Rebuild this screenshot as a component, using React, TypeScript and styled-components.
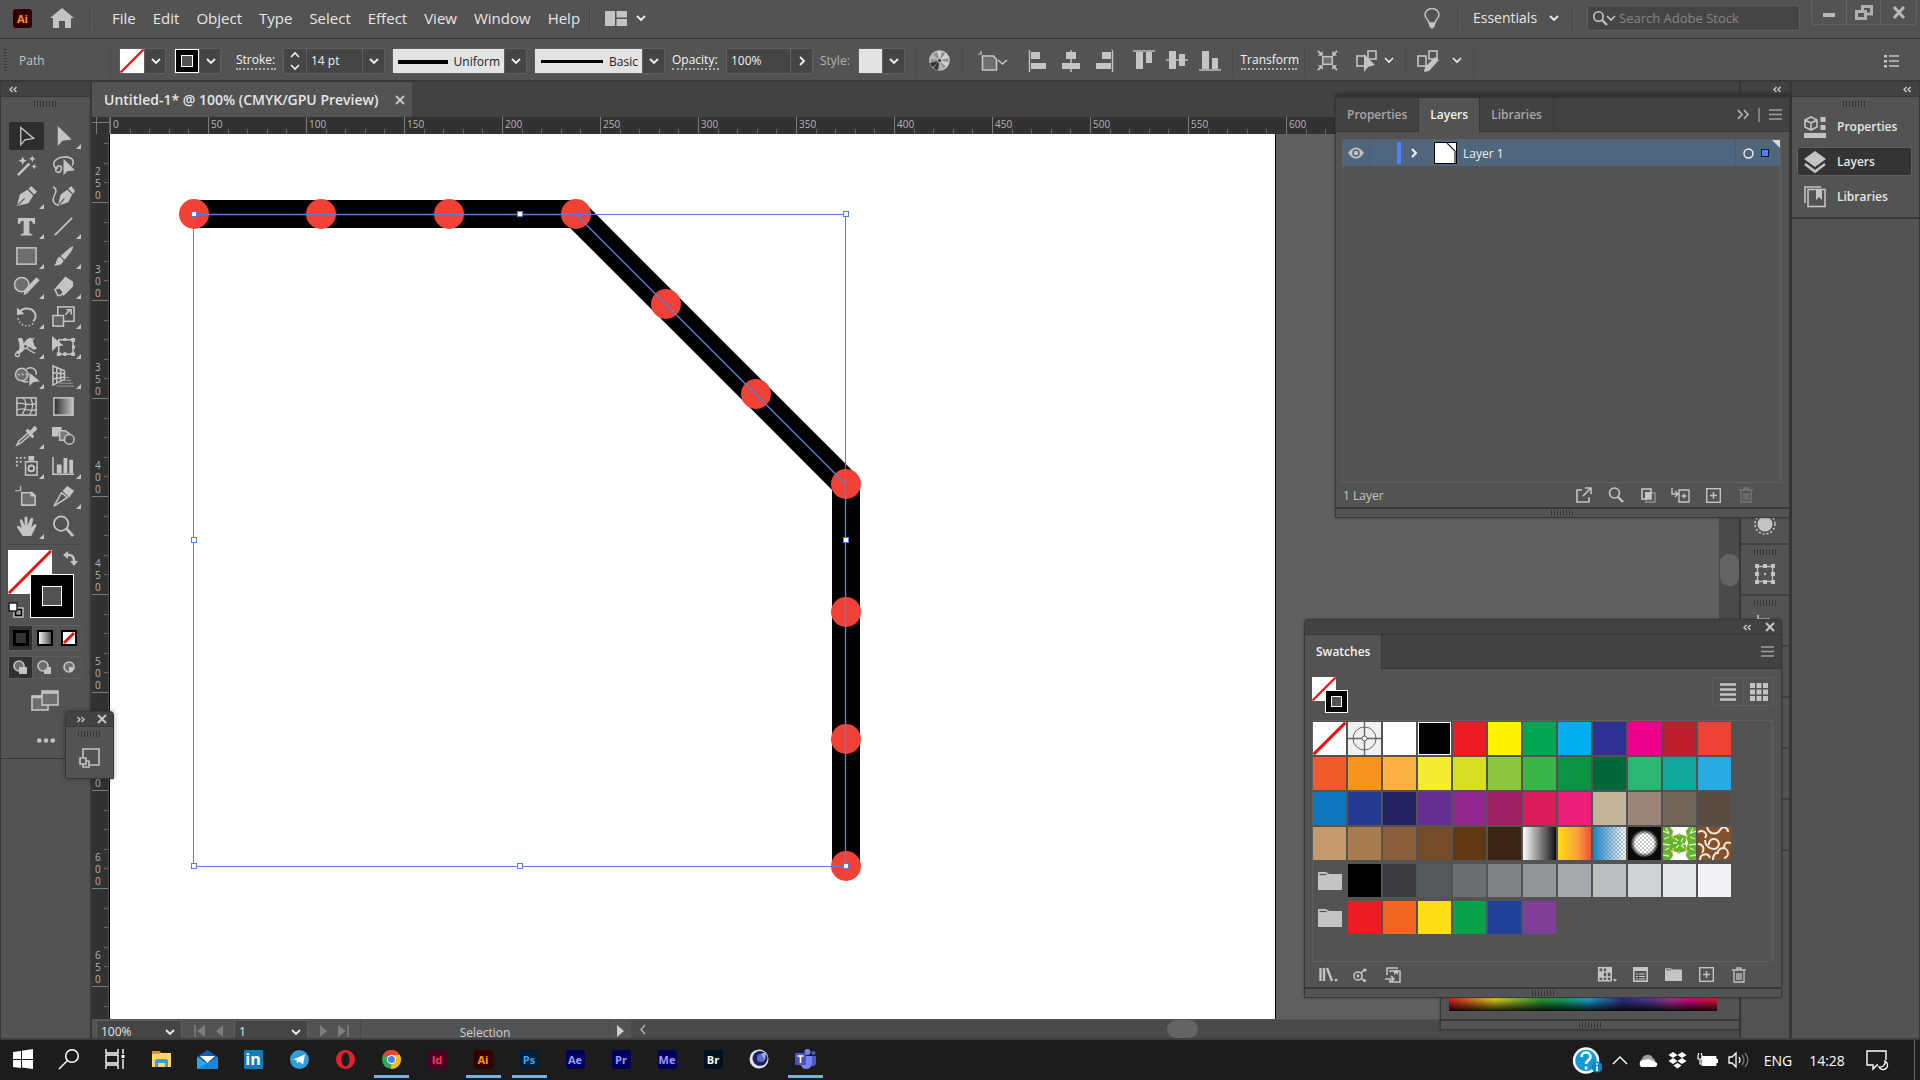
import React from "react";
import styled, { createGlobalStyle, css } from "styled-components";

const c = {
  panel: "#535353",
  dark: "#424242",
  line: "#383838",
  ruler: "#323232",
  canvas: "#606060",
  field: "#454545",
  edge: "#5f5f5f",
  icon: "#c4c4c4",
  text: "#e6e6e6",
  dim: "#a8a8a8",
  blue: "#4f80ff",
  path: "#5a7fd8",
};

const Global = createGlobalStyle`
  * { box-sizing: border-box; }
  html, body { margin: 0; background: ${c.panel}; }
  body { font-family: "Open Sans", "Noto Sans", sans-serif; font-size: 12px; color: ${c.text}; overflow: hidden; }
  button, input, select { font: inherit; color: inherit; background: none; border: 0; padding: 0; margin: 0; outline: 0; appearance: none; border-radius: 0; min-width: 0; }
  svg { display: block; flex: none; }
`;

/* ---------- shared parts ---------- */
const Shell = styled.div`
  display: flex;
  flex-direction: column;
  height: 100vh;
`;
const Button = styled.button<{ $w?: number; $h?: number }>`
  display: flex;
  flex: none;
  align-items: center;
  justify-content: center;
  width: ${(p) => (p.$w ? p.$w + "px" : "auto")};
  height: ${(p) => (p.$h ? p.$h + "px" : "auto")};
  color: ${c.icon};
`;
const Svg = styled.svg<{ $w: number; $h: number }>`
  width: ${(p) => p.$w}px;
  height: ${(p) => p.$h}px;
  fill: none;
  stroke: currentColor;
  stroke-width: 1.6;
  overflow: visible;
`;
const Spacer = styled.div`
  flex: 1;
`;
const Grip = styled.div<{ $vertical?: boolean }>`
  flex: none;
  width: ${(p) => (p.$vertical ? 3 : 23)}px;
  height: ${(p) => (p.$vertical ? 24 : 6)}px;
  background: repeating-linear-gradient(
    ${(p) => (p.$vertical ? "to bottom" : "to right")},
    #343434 0 1px,
    #555 1px 3px
  );
`;

type IP = { w?: number; h?: number; vb?: string; children: React.ReactNode };
const I = ({ w = 24, h, vb = "0 0 24 24", children }: IP) => (
  <Svg $w={w} $h={h ?? w} viewBox={vb} aria-hidden="true">
    {children}
  </Svg>
);
const F = { fill: "currentColor", stroke: "none" };

const Chevron = ({ color = "#f0f0f0" }: { color?: string }) => (
  <I w={10} h={6} vb="0 0 10 6">
    <path d="M1 1l4 4 4-4" strokeWidth="1.8" stroke={color} />
  </I>
);
const DoubleLeft = () => (
  <I w={8} h={5} vb="0 0 8 5">
    <path d="M3.5 0L1 2.5 3.5 5M7.5 0L5 2.5 7.5 5" strokeWidth="1.4" stroke="#ccc" />
  </I>
);
const Close = () => (
  <I w={8} vb="0 0 8 8">
    <path d="M0 0l8 8M8 0L0 8" strokeWidth="2" />
  </I>
);
const MenuLines = () => (
  <I w={13} h={11} vb="0 0 13 11">
    <path d="M0 1h13M0 5.5h13M0 10h13" strokeWidth="1.4" stroke="#a0a0a0" />
  </I>
);

/* ---------- menu bar ---------- */
const MenuBar = styled.header`
  display: flex;
  align-items: center;
  height: 39px;
  flex: none;
  border-bottom: 1px solid ${c.line};
  padding: 0 3px 2px 13px;
`;
const Badge = styled.span<{ $bg: string; $fg: string; $large?: boolean }>`
  display: flex;
  align-items: center;
  justify-content: center;
  width: 19px;
  height: 19px;
  border-radius: ${(p) => (p.$large ? 1 : 3)}px;
  background: ${(p) => p.$bg};
  color: ${(p) => p.$fg};
  font-size: ${(p) => (p.$large ? 16 : 11)}px;
  font-weight: 700;
  line-height: 1;
`;
const Home = styled(Button)`
  margin: 0 16px 0 18px;
`;
const BarRule = styled.span`
  flex: none;
  width: 2px;
  height: 24px;
  background: #5f5f5f;
  border-left: 1px solid #474747;
`;
const Menus = styled.nav`
  display: flex;
  gap: 1px;
  padding-left: 12px;
  width: 497px;
`;
const MenuItem = styled.button`
  padding: 0 8px;
  font-size: 15px;
  line-height: 20px;
`;
const LayoutButton = styled(Button)`
  gap: 9px;
  margin-left: 14px;
`;
const Picker = styled.label`
  display: flex;
  align-items: center;
  gap: 8px;
`;
const Workspaces = styled.select`
  width: 68px;
  font-size: 14px;
  line-height: 20px;
`;
const TopRight = styled.div`
  display: flex;
  align-items: center;
  gap: 13px;
  height: 100%;
`;
const Bulb = styled(Button)`
  margin-right: 5px;
`;
const SearchBox = styled.label`
  display: flex;
  align-items: center;
  gap: 4px;
  width: 213px;
  height: 26px;
  padding-left: 5px;
  background: ${c.field};
  border: 1px solid ${c.edge};
  border-radius: 3px;
  margin-right: -2px;
  color: ${c.icon};
  input {
    flex: 1;
    font-size: 13px;
  }
  input::placeholder {
    color: #858585;
    opacity: 1;
  }
`;
const WindowButtons = styled.div`
  display: flex;
  align-self: flex-start;
  height: 25px;
  border: 1px solid #646464;
  border-top: 0;
  border-radius: 0 0 4px 4px;
  button + button {
    border-left: 1px solid #646464;
  }
`;

/* ---------- control bar ---------- */
const ControlBar = styled.section`
  display: flex;
  align-items: center;
  height: 43px;
  flex: none;
  padding: 2px 21px 0 0;
  border-bottom: 2px solid ${c.line};
`;
const Cell = styled.div<{ $w?: number; $gap?: number }>`
  display: flex;
  flex: none;
  align-items: center;
  justify-content: center;
  gap: ${(p) => p.$gap ?? 0}px;
  width: ${(p) => (p.$w ? p.$w + "px" : "auto")};
  height: 32px;
  border-right: 1px solid #4a4a4a;
  color: ${c.icon};
`;
const PathCell = styled(Cell)`
  justify-content: flex-start;
  gap: 12px;
  padding-left: 4px;
  font-size: 12px;
`;
const Options = styled(Cell)`
  justify-content: flex-start;
  padding: 0 10px 0 8px;
`;
const SwatchPicker = styled.div`
  display: flex;
  height: 26px;
  width: 47px;
  border: 1px solid ${c.edge};
  background: ${c.field};
  border-radius: 2px;
`;
const SwatchPair = styled.div`
  display: flex;
  gap: 8px;
  margin-right: 8px;
`;
const Caption = styled.label<{ $w: number; $plain?: boolean }>`
  width: ${(p) => p.$w}px;
  font-size: 12px;
  line-height: 17px;
  white-space: nowrap;
  color: ${(p) => (p.$plain ? "#b4b4b4" : "#f2f2f2")};
  border-bottom: ${(p) => (p.$plain ? "0" : "2px dotted #b0b0b0")};
`;
const Transform = styled.button`
  width: 56px;
  font-size: 12px;
  line-height: 17px;
  white-space: nowrap;
  color: #f2f2f2;
  border-bottom: 2px dotted #b0b0b0;
`;
const Field = styled.div<{ $w: number }>`
  display: flex;
  width: ${(p) => p.$w}px;
  height: 26px;
  background: ${c.field};
  border: 1px solid ${c.edge};
  border-radius: 2px;
  color: #f0f0f0;
  input {
    flex: 1;
    padding-left: 4px;
    font-size: 12px;
  }
  button + input {
    border-left: 1px solid ${c.edge};
  }
`;
const Drop = styled(Button)`
  width: 22px;
  border-left: 1px solid ${c.edge};
`;
const Brush = styled.button`
  display: flex;
  flex: 1;
  align-items: center;
  justify-content: flex-end;
  gap: 6px;
  padding: 2px 4px 0 0;
  background: #e3e3e3;
  color: #222;
  font-size: 12px;
`;
const BrushLine = styled.span<{ $w: number; $t: number }>`
  width: ${(p) => p.$w}px;
  height: ${(p) => p.$t}px;
  background: #000;
`;
const StyleChip = styled.span`
  width: 24px;
  background: #e3e3e3;
`;

const NoneIcon = ({ s }: { s: number }) => (
  <svg width={s} height={s} viewBox="0 0 24 24">
    <rect width="24" height="24" fill="#fff" />
    <path d="M0.500 23.500L23.500 0.500" stroke="#e81010" strokeWidth={s > 40 ? 1.6 : 2.2} />
  </svg>
);
const StrokeIcon = ({ s }: { s: number }) => (
  <svg width={s} height={s} viewBox={`0 0 ${s} ${s}`}>
    <rect x="0.5" y="0.5" width={s - 1} height={s - 1} fill="#000" stroke="#fff" />
    <rect
      x={Math.round(s * 0.27) + 0.5}
      y={Math.round(s * 0.27) + 0.5}
      width={s - 1 - 2 * Math.round(s * 0.27)}
      height={s - 1 - 2 * Math.round(s * 0.27)}
      fill="#535353"
      stroke="#fff"
    />
  </svg>
);

const alignH = [
  "M1.500 0v22|M3 2h9v7H3zM3 13h15v6H3z",
  "M10 0v22|M5 2h10v7H5zM1 13h18v6H1z",
  "M18.500 0v22|M8 2h9v7H8zM2 13h15v6H2z",
];
const alignV = [
  "M0 1h22|M3 2h7v17H3zM13 2h6v11h-6z",
  "M0 10h22|M3 1h7v18H3zM13 4h6v12h-6z",
  "M0 20h22|M3 1h7v18H3zM13 8h6v11h-6z",
];
const Align = ({ d, label }: { d: string; label: string }) => {
  const [l, f] = d.split("|");
  return (
    <Button $w={33} $h={30} aria-label={label}>
      <I w={22} h={22} vb="0 0 20 22">
        <path d={l} strokeWidth="1.4" />
        <path d={f} {...F} />
      </I>
    </Button>
  );
};
const AlignGroup = styled.div`
  display: flex;
  padding: 0 3px;
`;

/* ---------- workspace ---------- */
const Workspace = styled.main`
  position: relative;
  display: flex;
  flex: 1;
  min-height: 0;
  border-bottom: 2px solid #3e3e3e;
`;
const Tools = styled.aside`
  display: flex;
  flex-direction: column;
  width: 92px;
  flex: none;
  border-left: 1px solid ${c.line};
  border-right: 2px solid ${c.line};
`;
const Head = styled.div`
  display: flex;
  align-items: center;
  height: 15px;
  flex: none;
  padding: 0 8px;
  background: ${c.dark};
  border-bottom: 1px solid ${c.line};
`;
const HeadEnd = styled(Head)`
  justify-content: flex-end;
`;
const PanelHead = styled(HeadEnd)`
  gap: 15px;
  padding-right: 7px;
  border-radius: 4px 4px 0 0;
`;
const ToolBody = styled.div`
  height: 662px;
  border-bottom: 1px solid ${c.line};
  border-right: 1px solid #4a4a4a;
`;
const GripRow = styled.div`
  display: flex;
  justify-content: center;
  align-items: flex-start;
  height: 25px;
  padding-top: 4px;
`;
const ToolGrid = styled.div`
  display: grid;
  grid-template-columns: 37px 37px;
  grid-auto-rows: 30px;
  padding-left: 8px;
`;
const ToolButton = styled.button<{ $on?: boolean; $more?: boolean }>`
  position: relative;
  display: flex;
  align-items: center;
  justify-content: center;
  width: 35px;
  height: 28px;
  color: ${c.icon};
  border-radius: 2px;
  background: ${(p) => (p.$on ? "#2d2d2d" : "none")};
  ${(p) =>
    p.$more &&
    css`
      &::after {
        content: "";
        position: absolute;
        right: 0;
        bottom: 1px;
        border-left: 5px solid transparent;
        border-bottom: 5px solid ${c.icon};
      }
    `}
`;
const FillStroke = styled.div`
  position: relative;
  height: 81px;
  margin: 2px 7px 0;
  border-top: 1px solid #4a4a4a;
`;
const Over = styled.button<{ $x: number; $y: number }>`
  position: absolute;
  left: ${(p) => p.$x}px;
  top: ${(p) => p.$y}px;
  color: ${c.icon};
`;
const Modes = styled.div<{ $h: number }>`
  display: flex;
  width: 74px;
  height: ${(p) => p.$h}px;
  margin: 0 0 5px 7px;
  border: 1px solid #5d5d5d;
  border-radius: 2px;
`;
const Mode = styled.button<{ $on?: boolean }>`
  flex: 1;
  display: flex;
  align-items: center;
  justify-content: center;
  color: ${c.icon};
  background: ${(p) => (p.$on ? "#303030" : "none")};
  & + & {
    border-left: 1px solid #5d5d5d;
  }
`;
const ScreenRow = styled.div<{ $h: number }>`
  display: flex;
  align-items: center;
  height: ${(p) => p.$h}px;
  padding-left: 30px;
`;

const star = (x: number, y: number, r: number) =>
  `M${x} ${y - r}l${r * 0.3} ${r * 0.7} ${r * 0.7} ${r * 0.3} ${-r * 0.7} ${r * 0.3} ${-r * 0.3} ${r * 0.7} ${-r * 0.3} ${-r * 0.7} ${-r * 0.7} ${-r * 0.3} ${r * 0.7} ${-r * 0.3}z`;

const tools: { n: string; more?: boolean; g: React.ReactNode }[] = [
  { n: "Selection", g: <path d="M6 2.5v18l4.500-5 9-1.500z" strokeWidth="1.4" /> },
  { n: "Direct selection", more: true, g: <path d="M6 1v21l5-5.500 9.500-1.500z" {...F} /> },
  {
    n: "Magic wand",
    g: (
      <>
        <path d="M3 21L15 9" strokeWidth="2.6" />
        <path d={star(8, 6, 4.5) + star(18, 4, 3.5) + star(20, 12, 3)} {...F} />
      </>
    ),
  },
  {
    n: "Lasso",
    g: (
      <>
        <path d="M5 15C-1 10 2 3 12 2c9-.5 12 4 9 9M5 13.500a2.500 2 0 1 1 4 1.500M9 11c2 3 0 8-3 7-3-1-3-4 0-4" />
        <path d="M12 4v17l4-4 8-1z" {...F} />
      </>
    ),
  },
  {
    n: "Pen",
    more: true,
    g: (
      <>
        <path d="M2 22l3-12 8-5 6 6-5 8z" {...F} />
        <path d="M14 4l3-3 6 6-3 3z" {...F} />
        <path d="M3 21l7-7" stroke={c.panel} strokeWidth="1.2" />
      </>
    ),
  },
  {
    n: "Curvature",
    g: (
      <>
        <path d="M1 2c5 2 3 6 1 10s0 9 5 9" />
        <path d="M6 22l3-12 7-5 5 5-4 8z" {...F} />
        <path d="M17 4l3-3 4 5-2 3z" {...F} />
        <path d="M7 21l6-7" stroke={c.panel} strokeWidth="1.2" />
      </>
    ),
  },
  { n: "Type", more: true, g: <path d="M3 3h18v6h-2.500c0-2-1-3-3.500-3v13l3 1v1.500H6V20l3-1V6c-2.500 0-3.500 1-3.500 3H3z" {...F} /> },
  { n: "Line", more: true, g: <path d="M3 21L21 3" strokeWidth="1.8" /> },
  { n: "Rectangle", more: true, g: <rect x="2" y="3" width="20" height="17" fill="#6e6e6e" /> },
  {
    n: "Paintbrush",
    more: true,
    g: (
      <>
        <path d="M22 1.500c1 2-6 11-9 14l-4-4c3-3 11-10.500 13-10z" {...F} />
        <path d="M8 12l4 4c-1 5-6 6-10 5 3-1 2-7 6-9z" {...F} />
      </>
    ),
  },
  {
    n: "Shaper",
    more: true,
    g: (
      <>
        <circle cx="7" cy="10" r="7.5" fill="#6e6e6e" />
        <path d="M24 4L12 16.500" strokeWidth="4.5" />
        <path d="M10 15l4 3.500-5 2.500z" {...F} />
      </>
    ),
  },
  {
    n: "Eraser",
    more: true,
    g: (
      <>
        <path d="M14 1.500l8 5.500v5L12 22l-3-5-5-4z" {...F} />
        <path d="M3 15l5-2 4 5-3 3.500H6z" fill={c.panel} />
      </>
    ),
  },
  {
    n: "Rotate",
    more: true,
    g: (
      <>
        <path d="M4 8C8 2 18 2 21 9c1 3 0 6-2 8" strokeWidth="2" />
        <path d="M2 2.500v8l8-1z" {...F} />
        <path d="M3 14c2 8 11 10 16 5" strokeDasharray="1.5 2.2" />
      </>
    ),
  },
  {
    n: "Scale",
    more: true,
    g: (
      <>
        <rect x="6" y="2" width="17" height="15" />
        <rect x="1" y="11" width="11" height="11" fill="#606060" />
        <path d="M14 10l5-5M15 5h5v5" />
      </>
    ),
  },
  {
    n: "Width",
    more: true,
    g: (
      <>
        <path d="M3 4c4-3 6 1 6 5 3-5 7-8 9-5 2 4 1 8 5 9-2 4-5 2-7 0-3-2-5 1-7 3-2 3-6 4-8 1 4 0 5-4 2-13z" {...F} />
        <path d="M3 20L20 3M11 13c3 1 4 4 10 6" strokeWidth="1.4" />
        <circle cx="2.500" cy="20.500" r="2" fill={c.panel} strokeWidth="1.4" />
        <circle cx="11" cy="12" r="2.200" fill={c.panel} strokeWidth="1.4" />
      </>
    ),
  },
  {
    n: "Free transform",
    more: true,
    g: (
      <>
        <rect x="7" y="5" width="15" height="15" />
        <path d="M0 1v16l5-5 7-1z" {...F} />
        <path d="M12 3h3v3h-3zM20 3h4v4h-4zM21 11h3v3h-3zM20 18h4v4h-4zM12 18h3v4h-3zM5 18h4v4H5z" {...F} />
      </>
    ),
  },
  {
    n: "Shape builder",
    more: true,
    g: (
      <>
        <circle cx="7" cy="10" r="6.500" fill="#6e6e6e" />
        <path d="M12 4c6-3 11 1 10 6M8 17c2 1 4 1 6 0" />
        <path d="M3 10h12" strokeDasharray="2 2" />
        <path d="M15 8v14l4-4 7-1z" {...F} />
      </>
    ),
  },
  {
    n: "Perspective grid",
    more: true,
    g: (
      <>
        <path d="M1 1v20l12-6V6zM1 8l12 1M1 14.500l12-2M5 3v16M9 5v12" />
        <path d="M14 13h4M12 16h8M8 19h14M5 22h18" strokeWidth="1" stroke="#999" />
      </>
    ),
  },
  {
    n: "Mesh",
    g: (
      <>
        <rect x="2" y="3" width="20" height="18" />
        <path d="M8 3c6 5 3 12-1 18M16 3c3 5 3 12-1 18M2 9c7-2 9 3 20 0M2 16c8-5 12 3 20-1" strokeWidth="1.3" />
      </>
    ),
  },
  {
    n: "Gradient",
    g: (
      <>
        <defs>
          <linearGradient id="tg">
            <stop offset="0" stopColor="#2a2a2a" />
            <stop offset="1" stopColor="#c4c4c4" />
          </linearGradient>
        </defs>
        <rect x="2" y="3" width="20" height="18" fill="url(#tg)" />
      </>
    ),
  },
  {
    n: "Eyedropper",
    more: true,
    g: (
      <>
        <path d="M14 8L4 17l-2 4 4-2L16 10" />
        <path d="M11 6l2-2 3 2 4-5c2 0 3 2 3 4l-5 4 2 3-2 2z" {...F} />
      </>
    ),
  },
  {
    n: "Blend",
    g: (
      <>
        <path d="M0 2h10v3l-3 2v5H0z" {...F} />
        <path d="M8 6h6l4 3-5 7H8z" fill="#7a7a7a" />
        <circle cx="18" cy="15" r="5" fill={c.panel} />
      </>
    ),
  },
  {
    n: "Symbol sprayer",
    more: true,
    g: (
      <>
        <rect x="11" y="7" width="12" height="14" />
        <circle cx="17" cy="14" r="3" strokeWidth="2" />
        <path d="M14 1h6v5h-6zM1 2h2v2H1zM5 2h2v2H5zM9 2h2v2H9zM1 6h2v2H1zM5 6h2v2H5zM1 10h2v2H1z" {...F} />
      </>
    ),
  },
  {
    n: "Graph",
    more: true,
    g: (
      <>
        <path d="M1 2v18h22" />
        <path d="M5 10h5v9H5zM12 3h4v16h-4zM18 5h4v14h-4z" {...F} />
      </>
    ),
  },
  {
    n: "Artboard",
    g: (
      <>
        <path d="M7 8h10l4 4v9H7z" fill="#6e6e6e" />
        <path d="M16 7h2l4 4v1h-6z" {...F} />
        <path d="M6 1v5M0 6h6" strokeWidth="1.2" />
      </>
    ),
  },
  {
    n: "Slice",
    more: true,
    g: (
      <>
        <path d="M2 22L10 8l6 5z" />
        <path d="M11 6l5-5 7 5-5 7z" {...F} />
      </>
    ),
  },
  {
    n: "Hand",
    more: true,
    g: <path d="M8 22L3 14c-2-2 0-4 2-2l2 2L5 6c0-2 2-2 3 0l2 5V3c0-2 3-2 3 0v8l3-7c1-2 3-1 3 1l-2 8 3-3c2-1 3 0 2 2l-5 10z" {...F} />,
  },
  {
    n: "Zoom",
    g: (
      <>
        <circle cx="9.500" cy="9" r="7.5" strokeWidth="1.8" />
        <path d="M15 14l7 8" strokeWidth="3" />
      </>
    ),
  },
];

/* ---------- document ---------- */
const Doc = styled.section`
  display: flex;
  flex: 1;
  flex-direction: column;
  min-width: 0;
  background: ${c.panel};
`;
const TabStrip = styled.div`
  display: flex;
  height: 35px;
  flex: none;
  background: ${c.dark};
`;
const DocTab = styled.div`
  display: flex;
  align-items: center;
  padding: 0 8px 0 12px;
  width: 320px;
  justify-content: space-between;
  background: ${c.panel};
  font-size: 14px;
  font-weight: 600;
  white-space: nowrap;
`;
const RulerRow = styled.div`
  display: flex;
  height: 17px;
  flex: none;
  background: ${c.ruler};
`;
const Corner = styled.div`
  width: 18px;
  flex: none;
  border-right: 1px solid #666;
  background: linear-gradient(#777, #777) 4px 0 / 1px 100% no-repeat, linear-gradient(#777, #777) 0 5px / 100% 1px no-repeat;
`;
const HRuler = styled.div`
  display: flex;
  flex: 1;
  overflow: hidden;
`;
const HMark = styled.span`
  flex: none;
  width: 98px;
  padding-left: 2px;
  border-left: 1px solid #7c7c7c;
  color: #b4b4b4;
  font-size: 10px;
  line-height: 15px;
  background: repeating-linear-gradient(to right, transparent 0 calc(98px / 5 - 1px), #666 calc(98px / 5 - 1px) calc(98px / 5)) 0 100% / 100% 5px no-repeat;
`;
const Middle = styled.div`
  display: flex;
  flex: 1;
  min-height: 0;
`;
const VRuler = styled.div`
  display: flex;
  flex-direction: column;
  width: 17px;
  flex: none;
  overflow: hidden;
  background: ${c.ruler};
  border-right: 1px solid #4c4c4c;
`;
const VMark = styled.span<{ $first?: boolean }>`
  display: flex;
  flex: none;
  flex-direction: column;
  justify-content: flex-end;
  height: ${(p) => (p.$first ? 69 : 98)}px;
  padding: 0 0 1px 3px;
  border-bottom: 1px solid #7c7c7c;
  color: #b4b4b4;
  font-size: 10px;
  line-height: 12px;
  background: repeating-linear-gradient(to top, transparent 0 calc(98px / 5 - 1px), #666 calc(98px / 5 - 1px) calc(98px / 5)) 100% 0 / 4px 100% no-repeat;
`;
const Canvas = styled.div`
  flex: 1;
  min-width: 0;
  overflow: hidden;
  background: ${c.canvas};
`;
const Artboard = styled.div`
  width: 1167px;
  height: 100%;
  background: #fff;
  border: solid #000;
  border-width: 0 1px;
`;
const VScroll = styled.div`
  width: 20px;
  flex: none;
  padding: 420px 0 0 1px;
  background: #4a4a4a;
`;
const Thumb = styled.div<{ $w: number; $h: number }>`
  width: ${(p) => p.$w}px;
  height: ${(p) => p.$h}px;
  border-radius: 9px;
  background: #646464;
`;
const Status = styled.footer`
  display: flex;
  align-items: stretch;
  height: 19px;
  flex: none;
  padding: 1px 0 0 4px;
  font-size: 12px;
  line-height: 26px;
  overflow: hidden;
`;
const StatusPick = styled.label<{ $w: number }>`
  display: flex;
  align-items: center;
  width: ${(p) => p.$w}px;
  height: 24px;
  padding-right: 6px;
  background: ${c.field};
  border: 1px solid ${c.edge};
  select {
    flex: 1;
    padding-left: 4px;
  }
`;
const Nav = styled.div<{ $w: number }>`
  display: flex;
  align-items: center;
  justify-content: center;
  gap: 11px;
  width: ${(p) => p.$w}px;
  height: 22px;
  color: #7c7c7c;
`;
const StatusText = styled.div`
  width: 250px;
  text-align: center;
  color: #cfcfcf;
  border: solid #484848;
  border-width: 0 1px;
`;
const HScroll = styled.div`
  display: flex;
  align-items: flex-start;
  flex: 1;
  padding-left: 9px;
  background: #4a4a4a;
  color: #aaa;
`;
const HTrack = styled.div`
  flex: 1;
  padding-left: 522px;
`;

const anchors = [
  [84, 80], [211, 80], [339, 80], [466, 80], [556, 170], [646, 260], [736, 350], [736, 478], [736, 605], [736, 732],
];
const handles = [
  [84, 80], [410, 80], [736, 80], [84, 406], [736, 406], [84, 732], [410, 732], [736, 732],
];

/* ---------- docks ---------- */
const Narrow = styled.aside`
  display: flex;
  flex-direction: column;
  width: 51px;
  flex: none;
  border-left: 2px solid ${c.line};
  border-right: 1px solid ${c.line};
  color: ${c.icon};
`;
const NarrowTop = styled.div`
  height: 397px;
`;
const DockGroup = styled.div`
  display: flex;
  flex-direction: column;
  align-items: center;
  gap: 9px;
  height: 51px;
  padding-top: 4px;
  border-bottom: 2px solid #404040;
`;
const Wide = styled.aside`
  display: flex;
  flex-direction: column;
  width: 130px;
  flex: none;
  border-left: 2px solid ${c.line};
  border-right: 1px solid ${c.line};
`;
const DockList = styled.div`
  height: 122px;
  padding: 4px 7px 0 5px;
  border-bottom: 2px solid ${c.line};
`;
const DockItem = styled.button<{ $on?: boolean }>`
  display: flex;
  align-items: center;
  gap: 11px;
  width: 100%;
  height: 29px;
  margin-bottom: 6px;
  padding-left: 6px;
  border-radius: 3px;
  border: 1px solid ${(p) => (p.$on ? "#606060" : "transparent")};
  background: ${(p) => (p.$on ? "#343434" : "none")};
  font-size: 12px;
  font-weight: 600;
  svg {
    color: ${c.icon};
  }
`;
const DockGrip = styled.div`
  display: flex;
  justify-content: center;
  height: 11px;
`;

/* ---------- floating panels ---------- */
const Panel = styled.section<{ $right: number; $w: number; $top?: number; $bottom?: number; $z: number }>`
  position: absolute;
  z-index: ${(p) => p.$z};
  right: ${(p) => p.$right}px;
  ${(p) => (p.$top !== undefined ? `top: ${p.$top}px;` : `bottom: ${p.$bottom}px;`)}
  width: ${(p) => p.$w}px;
  background: ${c.panel};
  border: 1px solid ${c.line};
  border-radius: 4px 4px 0 0;
  box-shadow: 0 0 3px rgba(0, 0, 0, 0.35);
`;
const Tabs = styled.div`
  display: flex;
  align-items: center;
  height: 34px;
  padding-right: 7px;
  background: ${c.dark};
  border-bottom: 1px solid ${c.line};
  color: #b8b8b8;
`;
const Tab = styled.button<{ $on?: boolean }>`
  height: 34px;
  padding: 0 11px;
  font-size: 12px;
  font-weight: 600;
  color: ${(p) => (p.$on ? "#f2f2f2" : c.dim)};
  background: ${(p) => (p.$on ? c.panel : "none")};
  border-right: 1px solid ${c.line};
`;
const LayersTop = styled.div`
  height: 4px;
  background: #333;
`;
const TabTools = styled.div`
  display: flex;
  align-items: center;
  gap: 9px;
`;
const LayerList = styled.div`
  height: 344px;
  margin: 7px 8px 0 6px;
  border: 1px solid ${c.edge};
`;
const LayerRow = styled.div`
  position: relative;
  display: flex;
  align-items: center;
  height: 26px;
  background: #50667c;
  color: #f0f0f0;
  font-size: 12px;
`;
const Eye = styled(Button)`
  border-right: 1px solid #475c71;
`;
const ColorBar = styled.span`
  width: 4px;
  height: 22px;
  margin: 0 10px 0 27px;
  background: ${c.blue};
`;
const Thumbnail = styled.span`
  margin: 0 6px 0 17px;
  border: 1px solid #000;
`;
const Target = styled.div`
  display: flex;
  align-items: center;
  gap: 7px;
  height: 26px;
  padding: 0 11px 0 7px;
  border-left: 1px solid #475c71;
`;
const Chip = styled.span`
  width: 8px;
  height: 8px;
  background: ${c.blue};
  border: 1px solid #10182c;
`;
const Fold = styled.span`
  position: absolute;
  top: 0;
  right: 0;
  border-top: 8px solid #d8d8d8;
  border-left: 8px solid transparent;
`;
const PanelFoot = styled.div<{ $h: number }>`
  display: flex;
  align-items: center;
  height: ${(p) => p.$h}px;
  padding: 0 27px 0 7px;
  color: ${c.icon};
`;
const GripFoot = styled.div`
  display: flex;
  justify-content: center;
  height: 10px;
  padding-top: 1px;
  border-top: 2px solid ${c.line};
`;
const SwatchTop = styled.div`
  display: flex;
  justify-content: space-between;
  height: 51px;
  padding: 8px 7px 0 7px;
`;
const FillStack = styled.div`
  position: relative;
  width: 40px;
  height: 40px;
`;
const ViewSwitch = styled.div`
  display: flex;
  height: 29px;
  border: 1px solid ${c.edge};
  border-radius: 3px;
  button + button {
    border-left: 1px solid ${c.edge};
  }
`;
const SwatchBox = styled.div`
  display: flex;
  flex-direction: column;
  gap: 4px;
  height: 242px;
  margin: 0 8px 0 7px;
  padding-top: 1px;
  border: 1px solid ${c.edge};
`;
const SwatchGrid = styled.div`
  display: grid;
  grid-template-columns: repeat(12, 33px);
  grid-auto-rows: 33px;
  gap: 2px;
`;
const Swatch = styled.button<{ $bg: string; $on?: boolean }>`
  display: flex;
  align-items: center;
  justify-content: center;
  overflow: hidden;
  background: ${(p) => p.$bg};
  border: ${(p) => (p.$on ? "1px solid #fff" : "0")};
  color: ${c.icon};
`;
const Spectrum = styled.div`
  height: 60px;
  margin: 8px 22px 8px 8px;
  background: linear-gradient(to bottom, transparent 78%, rgba(0, 0, 0, 0.9)),
    linear-gradient(to right, #ed1c24, #f0e020 17%, #2aa43a 35%, #16b060 42%, #1ab0e0 52%, #2e3192 65%, #5a3aa0 75%, #b03a9c 83%, #ec008c 90%, #e02030);
`;
const Mini = styled.section`
  position: absolute;
  z-index: 3;
  left: 65px;
  top: 629px;
  width: 49px;
  background: ${c.panel};
  border: 1px solid ${c.line};
  border-radius: 4px 4px 0 0;
  box-shadow: 0 0 5px rgba(0, 0, 0, 0.35);
`;
const MiniHead = styled(Head)`
  justify-content: space-between;
  padding: 0 7px 0 11px;
  color: ${c.icon};
`;
const MiniBody = styled.div`
  display: flex;
  flex-direction: column;
  align-items: center;
  gap: 11px;
  height: 51px;
  padding-top: 4px;
  color: ${c.icon};
`;

const leaf = (
  <svg width="33" height="33" viewBox="0 0 33 33">
    <rect width="33" height="33" fill="#fff" />
    <path d="M0 0h7l3 4-1 6 2 6-2 6 1 7-3 4H0zM33 0h-7l-3 4 1 6-2 6 2 6-1 7 3 4h7zM10 9l6-2 7 2 2 7-2 8-7 2-6-2-2-8z" fill="#62b32e" />
    <path d="M0 4l5 2M3 1l3 6M1 12l5-2M0 17l7 1M2 23l4-2M0 28l6 1M33 4l-5 2M30 1l-3 6M32 12l-5-2M33 17l-7 1M31 23l-4-2M33 28l-6 1M12 11l3 3M20 11l-2 4M13 21l3-3M21 21l-3-3M10 16h4M19 17h4" stroke="#e2f2c0" strokeWidth="1.300" />
    <path d="M8 8l3 4M25 8l-3 4M8 25l3-4M25 25l-3-4M16 6v3M16 24v3" stroke="#f3b62e" strokeWidth="1.300" />
  </svg>
);
const swirl = (
  <svg width="33" height="33" viewBox="0 0 33 33">
    <rect width="33" height="33" fill="#85502c" />
    <g fill="none" stroke="#f4e9dc" strokeWidth="2">
      <path d="M0 5c6-3 10 2 7 6M9 0c2 8 10 8 13 3s8-2 8 2M11 18a5 5 0 1 1 5 4 9 9 0 0 1-9-9M0 17c5 0 7 5 4 9M2 33c0-6 8-8 10-2M20 27a5 5 0 1 1 6 4M33 16c-6-2-8 2-6 6M15 33c0-4 2-7 5-8" />
    </g>
  </svg>
);
const checker = "repeating-conic-gradient(#c8c8c8 0 25%, #fff 0 50%) 0 0 / 4px 4px";
const registration = (
  <svg width="33" height="33" viewBox="0 0 33 33" fill="none" stroke="#666">
    <circle cx="16.5" cy="16.5" r="11.5" />
    <circle cx="16.5" cy="16.5" r="2.5" />
    <path d="M16.5 0v14M16.5 19v14M0 16.5h14M19 16.5h14" strokeWidth="1.4" />
  </svg>
);
const colors: string[] = [
  "none", "reg", "#ffffff", "#000000", "#ed1c24", "#fff200", "#00a651", "#00aeef", "#2e3192", "#ec008c", "#be1e2d", "#ef4136",
  "#f15a29", "#f7941d", "#fbb040", "#f5ec31", "#d7df23", "#8dc63f", "#39b54a", "#0b9444", "#006838", "#2bb673", "#12a79d", "#27aae1",
  "#1078be", "#253a91", "#262262", "#662d91", "#92278f", "#9e1f63", "#da1c5c", "#ed1e79", "#c2b59b", "#9b8579", "#726658", "#594a42",
  "#c49a6c", "#a97c50", "#8b5e3c", "#754c29", "#603913", "#3c2415",
  "linear-gradient(to right, #fff, #111)",
  "linear-gradient(to right, #fddc0e, #f9a040 60%, #ef4e3a)",
  `linear-gradient(to right, #1c80c4, transparent), ${checker}`,
  `radial-gradient(circle, transparent 40%, #0a0a0a 60%), ${checker}`,
  "leaf", "swirl",
];
const greys = ["#000000", "#3a3a3c", "#58595b", "#6d6e71", "#808285", "#939598", "#a7a9ac", "#bcbec0", "#d1d3d4", "#e6e7e8", "#f2f2f4"];
const brights = ["#ed1c24", "#f26522", "#ffde17", "#0aa14b", "#21409a", "#7f3f98"];
const special: Record<string, React.ReactNode> = { none: <NoneIcon s={33} />, reg: registration, leaf, swirl };

const Folder = ({ w = 24, h = 18 }: { w?: number; h?: number }) => (
  <I w={w} h={h} vb="0 0 24 18">
    <path d="M0 0h8l3 2h13v16H0z" {...F} />
    <path d="M1.5 2.500h7" stroke={c.panel} strokeWidth="1.2" />
  </I>
);
const PlusBox = () => (
  <I w={15} vb="0 0 15 15">
    <rect x="0.7" y="0.7" width="13.6" height="13.6" strokeWidth="1.4" />
    <path d="M4 7.500h7M7.500 4v7" strokeWidth="1.4" />
  </I>
);
const Trash = ({ color = "currentColor" }: { color?: string }) => (
  <I w={14} h={16} vb="0 0 14 16">
    <path d="M0 3h14M5 2.500V1h4v1.500M2 4v11h10V4M5 6v7M7 6v7M9 6v7" stroke={color} strokeWidth="1.3" />
  </I>
);

/* ---------- taskbar ---------- */
const Taskbar = styled.footer`
  display: flex;
  align-items: stretch;
  height: 40px;
  flex: none;
  background: #1c1c1c;
  color: #fff;
`;
const Task = styled.button<{ $open?: boolean }>`
  display: flex;
  align-items: center;
  justify-content: center;
  width: 46px;
  padding-bottom: 2px;
  background: ${(p) => (p.$open ? "linear-gradient(#76b0e0, #76b0e0) center 35px / 35px 3px no-repeat" : "none")};
`;
const Tray = styled.div`
  display: flex;
  align-items: center;
  gap: 10px;
  padding-right: 5px;
  font-size: 14px;
  button {
    display: flex;
    align-items: center;
    justify-content: center;
  }
`;
const TrayText = styled.button<{ $w: number }>`
  width: ${(p) => p.$w}px;
  white-space: nowrap;
`;
const Peek = styled.span`
  width: 1px;
  height: 40px;
  margin-left: 12px;
  background: #666;
`;

const apps: { n: string; open?: boolean; g: React.ReactNode }[] = [
  { n: "Start", g: <I w={20} vb="0 0 20 20"><path d="M0 3l8-1v8H0zM9 1.800L20 0v10H9zM0 11h8v8l-8-1zM9 11h11v9L9 18.500z" {...F} /></I> },
  { n: "Search", g: <I w={20} vb="0 0 20 20"><circle cx="13" cy="7" r="6.3" strokeWidth="1.5" /><path d="M8.500 11.500L0 20" strokeWidth="1.5" /></I> },
  { n: "Task view", g: <I w={20} vb="0 0 20 20"><path d="M1 0v4h12V0M1 6h12v8H1zM1 20v-4h12v4M18 0v5M18 10v10" strokeWidth="1.4" /><path d="M16.500 6h3v3h-3z" {...F} /></I> },
  { n: "File Explorer", g: <svg width="19" height="18" viewBox="0 0 19 18"><path d="M0 1h7l2 2h10v14H0z" fill="#fcd667" /><path d="M0 1h7l1 3H0z" fill="#d9961a" /><path d="M3 17v-6q0-2 2-2h9q2 0 2 2v6h-3v-4H6v4z" fill="#3a9be0" /></svg> },
  { n: "Mail", g: <svg width="21" height="19" viewBox="0 0 21 19"><path d="M0 7l10.500-7L21 7v3H0z" fill="#0f5fb4" /><path d="M0 7l10.500 6L21 7v12H0z" fill="#2aa7ee" /><path d="M3 6h15l-7.500 7z" fill="#fff" /><path d="M0 19L21 7v12z" fill="#1a86dc" /></svg> },
  { n: "LinkedIn", g: <Badge $bg="#0a7dbc" $fg="#fff" $large>in</Badge> },
  { n: "Telegram", g: <svg width="19" height="19" viewBox="0 0 19 19"><circle cx="9.5" cy="9.5" r="9.5" fill="#2f9fdb" /><path d="M3 9.500L15 4.500l-2 10-4-3-2 2-.5-3.500z" fill="#fff" /></svg> },
  { n: "Opera", g: <svg width="19" height="19" viewBox="0 0 19 19"><path fillRule="evenodd" d="M9.500 0a9.500 9.500 0 1 0 0 19 9.500 9.500 0 1 0 0-19zm0 2.500c2.500 0 4 3 4 7s-1.500 7-4 7-4-3-4-7 1.500-7 4-7z" fill="#e8202c" /></svg> },
  { n: "Chrome", open: true, g: <svg width="19" height="19" viewBox="0 0 19 19"><circle cx="9.5" cy="9.5" r="9.5" fill="#34a853" /><path d="M9.500 9.500L1.300 4.700A9.500 9.500 0 0 1 17.700 4.700z" fill="#ea4335" /><path d="M9.500 9.500V5h8.300a9.500 9.500 0 0 1-8.800 14z" fill="#fbbc05" /><circle cx="9.5" cy="9.5" r="4.5" fill="#fff" /><circle cx="9.5" cy="9.5" r="3.5" fill="#4285f4" /></svg> },
  { n: "InDesign", g: <Badge $bg="#49021f" $fg="#ff3366">Id</Badge> },
  { n: "Illustrator", open: true, g: <Badge $bg="#330000" $fg="#ff9a00">Ai</Badge> },
  { n: "Photoshop", open: true, g: <Badge $bg="#001e36" $fg="#31a8ff">Ps</Badge> },
  { n: "After Effects", g: <Badge $bg="#00005b" $fg="#9999ff">Ae</Badge> },
  { n: "Premiere", g: <Badge $bg="#00005b" $fg="#9999ff">Pr</Badge> },
  { n: "Media Encoder", g: <Badge $bg="#00005b" $fg="#9999ff">Me</Badge> },
  { n: "Bridge", g: <Badge $bg="#00101f" $fg="#ffffff">Br</Badge> },
  { n: "Cinema 4D", g: <svg width="20" height="20" viewBox="0 0 20 20"><circle cx="10" cy="10" r="9.5" fill="#dfe3ee" /><circle cx="11" cy="9.5" r="7.5" fill="#1c2460" /><circle cx="12" cy="9" r="4" fill="#5a70c8" /><path d="M12 5l5-2-1 8z" fill="#a0b0f0" /></svg> },
  { n: "Teams", open: true, g: <svg width="21" height="20" viewBox="0 0 21 20"><circle cx="12.5" cy="3" r="3" fill="#7b83eb" /><circle cx="18.5" cy="4" r="2" fill="#5059c9" /><path d="M14 7h7v7q-1 4-4 3z" fill="#5059c9" /><path d="M7 7h10v8q-1 5-6 5-4 0-5-4z" fill="#7b83eb" /><rect y="4" width="11" height="12" rx="1" fill="#4b53bc" /><path d="M2.500 7h6M5.500 7v7" stroke="#fff" strokeWidth="1.6" /></svg> },
];

const menus = ["File", "Edit", "Object", "Type", "Select", "Effect", "View", "Window", "Help"];

export default function App() {
  return (
    <>
      <Global />
      <Shell>
        <MenuBar>
          <Badge $bg="#330000" $fg="#ff9a00">Ai</Badge>
          <Home aria-label="Home">
            <I w={24} h={20} vb="0 0 24 20">
              <path d="M12 0l12 10h-3v10h-6v-7H9v7H3V10H0z" {...F} />
            </I>
          </Home>
          <BarRule />
          <Menus>
            {menus.map((m) => (
              <MenuItem key={m}>{m}</MenuItem>
            ))}
          </Menus>
          <BarRule />
          <LayoutButton aria-label="Arrange documents">
            <I w={22} h={15} vb="0 0 22 15">
              <path d="M0 0h10v15H0zM11.500 0H22v6.500H11.500zM11.500 8H22v7H11.500z" {...F} />
            </I>
            <Chevron />
          </LayoutButton>
          <Spacer />
          <TopRight>
            <Bulb aria-label="Learn">
              <I w={16} h={21} vb="0 0 16 21">
                <path d="M5 15c0-3-4-4-4-8a7 6.500 0 0 1 14 0c0 4-4 5-4 8z" strokeWidth="1.5" />
                <path d="M5 15h6v3l-3 3-3-3z" {...F} />
              </I>
            </Bulb>
            <BarRule />
            <Picker>
              <Workspaces aria-label="Workspace">
                <option>Essentials</option>
              </Workspaces>
              <Chevron />
            </Picker>
            <BarRule />
            <SearchBox>
              <I w={22} h={15} vb="0 0 22 15">
                <circle cx="5.5" cy="5.5" r="4.7" />
                <path d="M9 9l5 5" strokeWidth="2.2" />
                <path d="M14 5l4 4 4-4" />
              </I>
              <input placeholder="Search Adobe Stock" aria-label="Search Adobe Stock" />
            </SearchBox>
            <WindowButtons>
              <Button $w={34} aria-label="Minimize">
                <I w={14} h={14} vb="0 0 14 14"><path d="M1 10h12" strokeWidth="4" stroke="#b8b8b8" /></I>
              </Button>
              <Button $w={34} aria-label="Restore">
                <I w={18} h={15} vb="0 0 18 15">
                  <path d="M7.500 6V1.500h9V9H12M1.500 6.500h9v7h-9z" strokeWidth="3" stroke="#b0b0b0" />
                </I>
              </Button>
              <Button $w={36} aria-label="Close">
                <I w={12} h={11} vb="0 0 12 11"><path d="M1 0l10 11M11 0L1 11" strokeWidth="3" stroke="#b8b8b8" /></I>
              </Button>
            </WindowButtons>
          </TopRight>
        </MenuBar>

        <ControlBar>
          <PathCell $w={111}>
            <Grip $vertical />
            <span>Path</span>
          </PathCell>
          <Options $gap={7}>
            <SwatchPair>
              <SwatchPicker>
                <NoneIcon s={24} />
                <Drop aria-label="Fill colour"><Chevron /></Drop>
              </SwatchPicker>
              <SwatchPicker>
                <StrokeIcon s={24} />
                <Drop aria-label="Stroke colour"><Chevron /></Drop>
              </SwatchPicker>
            </SwatchPair>
            <Caption $w={40} htmlFor="stroke">Stroke:</Caption>
            <Field $w={102}>
              <Button $w={22} aria-label="Step stroke weight">
                <I w={10} h={18} vb="0 0 10 18"><path d="M1 5l4-4 4 4M1 13l4 4 4-4" stroke="#f0f0f0" /></I>
              </Button>
              <input id="stroke" defaultValue="14 pt" />
              <Drop aria-label="Stroke weights"><Chevron /></Drop>
            </Field>
            <Field $w={135}>
              <Brush><BrushLine $w={50} $t={4} />Uniform</Brush>
              <Drop aria-label="Width profile"><Chevron /></Drop>
            </Field>
            <Field $w={131}>
              <Brush><BrushLine $w={62} $t={3} />Basic</Brush>
              <Drop aria-label="Brush definition"><Chevron /></Drop>
            </Field>
            <Caption $w={47} htmlFor="opacity">Opacity:</Caption>
            <Field $w={87}>
              <input id="opacity" defaultValue="100%" />
              <Drop aria-label="Opacity slider">
                <I w={6} h={10} vb="0 0 6 10"><path d="M1 1l4 4-4 4" strokeWidth="1.8" stroke="#f0f0f0" /></I>
              </Drop>
            </Field>
            <Caption $w={31} $plain htmlFor="gstyle">Style:</Caption>
            <SwatchPicker>
              <StyleChip />
              <Drop id="gstyle"><Chevron /></Drop>
            </SwatchPicker>
          </Options>
          <Cell $w={47}>
            <Button aria-label="Recolor artwork">
              <I w={21} vb="0 0 24 24">
                <circle cx="12" cy="12" r="11" fill="#8e8e8e" />
                <path d="M12 12L9 1h6zM12 12l7-9 4 6zM12 12l11 2-3 6z" fill="#cfcfcf" stroke="none" />
                <path d="M12 12L4 20l-3-5zM12 12l-2 11-5-2z" fill="#333" stroke="none" />
                <path d="M12 12L1 10l3-6zM12 12l5 10-5 1z" fill="#b5b5b5" stroke="none" />
                <circle cx="12" cy="12" r="2.5" fill="#444" stroke="#ddd" strokeWidth="1" />
              </I>
            </Button>
          </Cell>
          <Cell $w={270}>
            <Button $w={52} $h={30} aria-label="Artboard">
              <I w={30} h={20} vb="0 0 30 20">
                <path d="M4.500 5h11l3 3.500V19h-14z" fill="#6e6e6e" />
                <path d="M3 0v3M0 3h4" strokeWidth="1.2" />
                <path d="M20 9l4.500 4L29 9" />
              </I>
            </Button>
            <AlignGroup>
              {alignH.map((d, i) => <Align key={i} d={d} label={`Horizontal align ${i + 1}`} />)}
            </AlignGroup>
            <AlignGroup>
              {alignV.map((d, i) => <Align key={i} d={d} label={`Vertical align ${i + 1}`} />)}
            </AlignGroup>
          </Cell>
          <Cell $w={72}>
            <Transform>Transform</Transform>
          </Cell>
          <Cell $w={101} $gap={18}>
            <Button aria-label="Isolate">
              <I w={21} vb="0 0 22 22">
                <rect x="6" y="7" width="10" height="8" fill="#6e6e6e" />
                <path d="M1 1l4 4M21 1l-4 4M1 21l4-4M21 21l-4-4" strokeWidth="1.8" />
                <path d="M1 6h5V1zM21 6h-5V1zM1 16h5v5zM21 16h-5v5z" {...F} />
              </I>
            </Button>
            <Button aria-label="Select similar">
              <I w={38} h={22} vb="0 0 38 22">
                <rect x="1" y="6" width="8" height="10" />
                <rect x="12" y="1" width="8" height="8" />
                <path d="M8 4v18l4-5 7-2z" {...F} />
                <path d="M29 8l4 4 4-4" stroke="#f0f0f0" />
              </I>
            </Button>
          </Cell>
          <Cell $w={68}>
            <Button aria-label="Edit similar">
              <I w={45} h={22} vb="0 0 45 22">
                <rect x="1" y="6" width="8" height="10" />
                <rect x="12" y="1" width="8" height="8" />
                <path d="M18 7l4 3-10 11-5 1 1-5z" {...F} />
                <path d="M36 8l4 4 4-4" stroke="#f0f0f0" />
              </I>
            </Button>
          </Cell>
          <Spacer />
          <Button aria-label="Control bar menu">
            <I w={15} h={14} vb="0 0 15 14">
              <path d="M5 2h10M5 7h10M5 12h10" strokeWidth="1.5" />
              <path d="M0 1h3v2.500H0zM0 6h3v2.500H0zM0 11h3v2.500H0z" {...F} />
            </I>
          </Button>
        </ControlBar>

        <Workspace>
          <Tools>
            <Head><DoubleLeft /></Head>
            <ToolBody>
              <GripRow><Grip /></GripRow>
              <ToolGrid>
                {tools.map((t, i) => (
                  <ToolButton key={t.n} aria-label={t.n} $on={i === 0} $more={t.more}>
                    <I w={23}>{t.g}</I>
                  </ToolButton>
                ))}
              </ToolGrid>
              <FillStroke>
                <Over $x={0} $y={5} aria-label="Fill">
                  <NoneIcon s={44} />
                </Over>
                <Over $x={22} $y={29} aria-label="Stroke">
                  <StrokeIcon s={44} />
                </Over>
                <Over $x={55} $y={6} aria-label="Swap">
                  <I w={15} vb="0 0 15 15">
                    <path d="M4 4h2q5 0 5 6" strokeWidth="2.4" />
                    <path d="M0 4l5-4v8zM7 10h8l-4 5z" {...F} />
                  </I>
                </Over>
                <Over $x={0} $y={57} aria-label="Default">
                  <I w={16} vb="0 0 16 16">
                    <rect x="6" y="6" width="9" height="9" fill="#000" stroke="#ddd" strokeWidth="1.2" />
                    <rect x="9" y="9" width="3" height="3" fill="#555" stroke="#ddd" strokeWidth="1" />
                    <rect x="1" y="1" width="8" height="8" fill="#fff" stroke="#222" strokeWidth="1.500" />
                  </I>
                </Over>
              </FillStroke>
              <Modes $h={26}>
                <Mode $on aria-label="Colour"><svg width="16" height="16"><rect x="1.5" y="1.5" width="13" height="13" fill="#333" stroke="#000" strokeWidth="3" /></svg></Mode>
                <Mode aria-label="Gradient">
                  <svg width="16" height="16">
                    <defs><linearGradient id="mg"><stop offset="0" stopColor="#fff" /><stop offset="1" stopColor="#444" /></linearGradient></defs>
                    <rect x="1" y="1" width="14" height="14" fill="url(#mg)" stroke="#000" strokeWidth="2" />
                  </svg>
                </Mode>
                <Mode aria-label="None"><svg width="16" height="16"><rect x="1" y="1" width="14" height="14" fill="#fff" stroke="#000" strokeWidth="2" /><path d="M3 13L13 3" stroke="#f01010" strokeWidth="3" /></svg></Mode>
              </Modes>
              <Modes $h={23}>
                <Mode $on aria-label="Draw normal"><I w={15} vb="0 0 15 15"><circle cx="6" cy="6" r="5" fill="#6e6e6e" /><path d="M6 7h8v7H6z" {...F} /></I></Mode>
                <Mode aria-label="Draw behind"><I w={15} vb="0 0 15 15"><path d="M7 7h7v7H7z" {...F} /><circle cx="6" cy="6" r="5" fill="#6e6e6e" /></I></Mode>
                <Mode aria-label="Draw inside"><I w={15} vb="0 0 15 15"><circle cx="7" cy="7" r="5" fill="#6e6e6e" /><path d="M7 7h5q0 5-5 5z" {...F} /></I></Mode>
              </Modes>
              <ScreenRow $h={33}>
                <Button aria-label="Screen mode">
                  <I w={28} h={21} vb="0 0 28 21">
                    <rect x="1" y="6" width="16" height="14" fill="#6e6e6e" />
                    <rect x="11" y="1" width="16" height="14" fill="#6e6e6e" />
                    <path d="M1 7h9M11 2.500h16" strokeWidth="2.5" />
                  </I>
                </Button>
              </ScreenRow>
              <ScreenRow $h={46}>
                <Button $w={29} aria-label="Edit toolbar">
                  <I w={18} h={5} vb="0 0 18 5"><path d="M0 2.500a2.300 2.300 0 1 1 4.600 0 2.300 2.300 0 1 1-4.600 0zM6.700 2.500a2.300 2.300 0 1 1 4.600 0 2.300 2.300 0 1 1-4.600 0zM13.400 2.500a2.300 2.300 0 1 1 4.600 0 2.300 2.300 0 1 1-4.600 0z" {...F} /></I>
                </Button>
              </ScreenRow>
            </ToolBody>
          </Tools>

          <Doc>
            <TabStrip>
              <DocTab>
                Untitled-1* @ 100% (CMYK/GPU Preview)
                <Button aria-label="Close document"><Close /></Button>
              </DocTab>
            </TabStrip>
            <RulerRow>
              <Corner />
              <HRuler>
                {Array.from({ length: 13 }, (_, i) => <HMark key={i}>{i * 50}</HMark>)}
              </HRuler>
            </RulerRow>
            <Middle>
              <VRuler>
                {Array.from({ length: 9 }, (_, i) => (
                  <VMark key={i} $first={i === 0}>
                    {String(250 + i * 50).split("").map((d, k) => <span key={k}>{d}</span>)}
                  </VMark>
                ))}
                <VMark />
              </VRuler>
              <Canvas>
                <Artboard>
                  <svg width="100%" height="100%">
                    <path d="M84 80H466L736 350V732" fill="none" stroke="#000" strokeWidth="28" strokeLinejoin="bevel" />
                    {anchors.map(([x, y]) => <circle key={`${x}-${y}`} cx={x} cy={y} r="15" fill="#ef4136" />)}
                    <rect x="83.500" y="80.500" width="652" height="652" fill="none" stroke={c.path} />
                    <path d="M84 80.500H466L735.500 350V732" fill="none" stroke={c.path} strokeWidth="1.4" />
                    {handles.map(([x, y]) => <rect key={`${x}-${y}`} x={x - 2.5} y={y - 2.5} width="5" height="5" fill="#fff" stroke={c.path} />)}
                  </svg>
                </Artboard>
              </Canvas>
              <VScroll><Thumb $w={19} $h={32} /></VScroll>
            </Middle>
            <Status>
              <StatusPick $w={86}>
                <select aria-label="Zoom"><option>100%</option></select>
                <Chevron />
              </StatusPick>
              <Nav $w={52}>
                <I w={11} h={12} vb="0 0 11 12"><path d="M1 0v12" /><path d="M11 0v12L3 6z" {...F} /></I>
                <I w={7} h={12} vb="0 0 7 12"><path d="M7 0v12L0 6z" {...F} /></I>
              </Nav>
              <StatusPick $w={74}>
                <select aria-label="Artboard"><option>1</option></select>
                <Chevron />
              </StatusPick>
              <Nav $w={52}>
                <I w={7} h={12} vb="0 0 7 12"><path d="M0 0v12l7-6z" {...F} /></I>
                <I w={11} h={12} vb="0 0 11 12"><path d="M10 0v12" /><path d="M0 0v12l8-6z" {...F} /></I>
              </Nav>
              <StatusText>Selection</StatusText>
              <Nav $w={21}>
                <I w={7} h={12} vb="0 0 7 12"><path d="M0 0v12l7-6z" fill="#ccc" stroke="none" /></I>
              </Nav>
              <HScroll>
                <I w={5} h={19} vb="0 0 5 19"><path d="M5 5L1 9.500 5 14" /></I>
                <HTrack><Thumb $w={31} $h={18} /></HTrack>
              </HScroll>
            </Status>
          </Doc>

          <Narrow>
            <HeadEnd><DoubleLeft /></HeadEnd>
            <NarrowTop />
            <DockGroup>
              <Grip />
              <I w={22} h={22} vb="0 0 22 22"><circle cx="11" cy="11" r="7.5" {...F} /><circle cx="11" cy="11" r="10" strokeDasharray="2 2" /></I>
            </DockGroup>
            <DockGroup>
              <Grip />
              <I w={20} vb="0 0 20 20">
                <rect x="2.5" y="2.5" width="15" height="15" strokeWidth="1.300" />
                <path d="M0 0h4v4H0zM8 0h4v4H8zM16 0h4v4h-4zM0 8h4v4H0zM16 8h4v4h-4zM0 16h4v4H0zM8 16h4v4H8zM16 16h4v4h-4zM9 9h2v2H9z" {...F} />
              </I>
            </DockGroup>
            <DockGroup>
              <Grip />
              <I w={18} vb="0 0 18 18"><path d="M2 0v18M2 4h12" /></I>
            </DockGroup>
            <DockGroup />
            <DockGroup />
            <DockGroup />
            <DockGroup />
          </Narrow>

          <Wide>
            <HeadEnd><DoubleLeft /></HeadEnd>
            <DockList>
              <DockGrip><Grip /></DockGrip>
              <DockItem>
                <I w={22} vb="0 0 22 22">
                  <path d="M7 1l6 3v7l-6 3-6-3V4zM1 4l6 3 6-3M7 7v7" />
                  <path d="M16.500 1h5v5h-5zM16.500 9h5v5h-5zM0 17h22v5H0z" {...F} />
                </I>
                Properties
              </DockItem>
              <DockItem $on>
                <I w={22} vb="0 0 22 22">
                  <path d="M11 0l11 8-11 8L0 8z" {...F} />
                  <path d="M1 13l10 7.500L21 13" strokeWidth="2.6" />
                </I>
                Layers
              </DockItem>
              <DockItem>
                <I w={22} vb="0 0 22 22">
                  <path d="M1 17V1h16" />
                  <rect x="4" y="3.5" width="17" height="17" />
                  <path d="M12 3h6v11l-3-3-3 3z" {...F} />
                </I>
                Libraries
              </DockItem>
            </DockList>
          </Wide>

          <Panel $right={130} $w={455} $top={11} $z={2}>
            <LayersTop />
            <Tabs>
              <Tab>Properties</Tab>
              <Tab $on>Layers</Tab>
              <Tab>Libraries</Tab>
              <Spacer />
              <TabTools>
                <I w={12} h={9} vb="0 0 12 9"><path d="M1 0l4 4.500L1 9M7 0l4 4.500L7 9" /></I>
                <I w={2} h={14} vb="0 0 2 14"><path d="M1 0v14" strokeWidth="1" /></I>
                <MenuLines />
              </TabTools>
            </Tabs>
            <LayerList>
              <LayerRow>
                <Eye $w={27} $h={26} aria-label="Toggle visibility">
                  <I w={16} h={12} vb="0 0 16 12">
                    <path d="M0 6q8-11 16 0-8 11-16 0z" {...F} />
                    <circle cx="8" cy="6" r="3" stroke="#50667c" />
                  </I>
                </Eye>
                <ColorBar />
                <Button aria-label="Expand layer">
                  <I w={6} h={10} vb="0 0 6 10"><path d="M1 1l4 4-4 4" strokeWidth="2" stroke="#f4f4f4" /></I>
                </Button>
                <Thumbnail>
                  <svg width="21" height="20"><rect width="21" height="20" fill="#fff" /><path d="M12 0l8 8v12" fill="none" stroke="#222" strokeWidth="1.2" /></svg>
                </Thumbnail>
                Layer 1
                <Spacer />
                <Target>
                  <I w={11} vb="0 0 11 11"><circle cx="5.5" cy="5.5" r="4.5" strokeWidth="1.4" /></I>
                  <Chip />
                </Target>
                <Fold />
              </LayerRow>
            </LayerList>
            <PanelFoot $h={24}>
              1 Layer
              <Spacer />
              <Button $w={33} aria-label="Export">
                <I w={16} vb="0 0 16 16"><path d="M6 3H1v12h12v-5M7 9l7-7M9 1h6v6" /></I>
              </Button>
              <Button $w={32} aria-label="Locate">
                <I w={16} vb="0 0 16 16"><circle cx="6.5" cy="6" r="5" /><path d="M10 10l5 5" strokeWidth="2.4" /></I>
              </Button>
              <Button $w={32} aria-label="Clipping mask">
                <I w={15} vb="0 0 15 15"><rect x="5" y="5" width="9" height="9" stroke="#8a8a8a" /><rect x="1" y="1" width="9" height="10" /><path d="M4 4h6v7H4z" {...F} /></I>
              </Button>
              <Button $w={33} aria-label="New sublayer">
                <I w={19} h={15} vb="0 0 19 15"><path d="M1 0v6h5M4 3l3 3-3 3M8 2h10v12H8zM10.500 8h5M13 5.500v5" strokeWidth="1.4" /></I>
              </Button>
              <Button $w={33} aria-label="New layer"><PlusBox /></Button>
              <Button $w={32} aria-label="Delete layer"><Trash color="#777" /></Button>
            </PanelFoot>
            <GripFoot><Grip /></GripFoot>
          </Panel>

          <Panel $right={138} $w={478} $top={537} $z={2}>
            <PanelHead>
              <DoubleLeft />
              <Button aria-label="Close swatches"><Close /></Button>
            </PanelHead>
            <Tabs>
              <Tab $on>Swatches</Tab>
              <Spacer />
              <MenuLines />
            </Tabs>
            <SwatchTop>
              <FillStack>
                <Over $x={0} $y={0} aria-label="Swatch fill"><NoneIcon s={24} /></Over>
                <Over $x={13} $y={13} aria-label="Swatch stroke"><StrokeIcon s={23} /></Over>
              </FillStack>
              <ViewSwitch>
                <Button $w={30} aria-label="List view">
                  <I w={16} h={18} vb="0 0 16 18"><path d="M0 1.500h16M0 6.500h16M0 11.500h16M0 16.500h16" strokeWidth="2.4" /></I>
                </Button>
                <Button $w={30} aria-label="Thumbnail view">
                  <I w={18} h={18} vb="0 0 18 18"><path d="M0 2.500h18M0 9h18M0 15.500h18" strokeWidth="5" strokeDasharray="5 1.5" /></I>
                </Button>
              </ViewSwitch>
            </SwatchTop>
            <SwatchBox>
              <SwatchGrid>
                {colors.map((k, i) => (
                  <Swatch key={i} $bg={special[k] ? "#f0f0f0" : k} $on={i === 3} aria-label={`Swatch ${i + 1}`}>
                    {special[k]}
                  </Swatch>
                ))}
              </SwatchGrid>
              {[greys, brights].map((g, n) => (
                <SwatchGrid key={n}>
                  <Swatch $bg="none" aria-label={`Colour group ${n + 1}`}><Folder /></Swatch>
                  {g.map((k) => <Swatch key={k} $bg={k} aria-label={k} />)}
                </SwatchGrid>
              ))}
            </SwatchBox>
            <PanelFoot $h={25}>
              <Button $w={32} aria-label="Swatch libraries">
                <I w={19} h={15} vb="0 0 19 15"><path d="M1.500 1v13M5 1v13M8 1l5 13" strokeWidth="2.4" /><path d="M15 12h4l-2 3z" {...F} /></I>
              </Button>
              <Button $w={32} aria-label="Colour themes">
                <I w={14} vb="0 0 14 14"><circle cx="5" cy="8" r="4" /><circle cx="5" cy="8" r="1.4" {...F} /><path d="M8 5l4-4M9 11l3 2" /><circle cx="12" cy="2" r="1.6" {...F} /><circle cx="11.5" cy="12.5" r="1.6" {...F} /></I>
              </Button>
              <Button $w={34} aria-label="Add to library">
                <I w={16} vb="0 0 16 16"><path d="M2 8V1h11M5 5V4h10v11H5v-2M0 12h8M6 9l3 3-3 3" /><path d="M9 3h4v5l-2-2-2 2z" {...F} /></I>
              </Button>
              <Spacer />
              <Button $w={33} aria-label="Swatch kinds">
                <I w={19} h={15} vb="0 0 19 15"><rect x="0.7" y="0.7" width="12.5" height="13" /><path d="M5 1v13M9 1v13M1 5h12M1 10h12" /><path d="M1 5h4v5H1zM9 1h4v4H9z" {...F} /><path d="M15 12h4l-2 3z" {...F} /></I>
              </Button>
              <Button $w={33} aria-label="Swatch options">
                <I w={15} vb="0 0 15 15"><rect x="0.8" y="0.8" width="13.4" height="13.4" /><path d="M1 2.500h13" strokeWidth="3" /><path d="M3 7h2M6 7h6M3 9.500h2M6 9.500h6M3 12h2M6 12h6" strokeWidth="1.2" /></I>
              </Button>
              <Button $w={33} aria-label="New colour group"><Folder w={17} h={13} /></Button>
              <Button $w={33} aria-label="New swatch"><PlusBox /></Button>
              <Button $w={31} aria-label="Delete swatch"><Trash /></Button>
            </PanelFoot>
            <GripFoot><Grip /></GripFoot>
          </Panel>

          <Panel $right={180} $w={300} $bottom={8} $z={1}>
            <Spectrum />
            <GripFoot><Grip /></GripFoot>
          </Panel>

          <Mini>
            <MiniHead>
              <I w={8} h={5} vb="0 0 8 5"><path d="M.5 0L3 2.500.5 5M4.500 0L7 2.500 4.500 5" strokeWidth="1.4" /></I>
              <Button aria-label="Close panel"><Close /></Button>
            </MiniHead>
            <MiniBody>
              <Grip />
              <I w={21} vb="0 0 21 21">
                <path d="M4 9V1h16v16h-9" />
                <path d="M1 10h6v6H1zM7 13h3v6H4v-3" />
              </I>
            </MiniBody>
          </Mini>
        </Workspace>

        <Taskbar>
          {apps.map((a) => (
            <Task key={a.n} $open={a.open} aria-label={a.n}>{a.g}</Task>
          ))}
          <Spacer />
          <Tray>
            <button aria-label="Help">
              <svg width="29" height="27" viewBox="0 0 29 27">
                <circle cx="13" cy="13.5" r="12" fill="#159ad6" stroke="#fff" strokeWidth="2.5" />
                <path d="M8.500 10c0-6 9-6 9 0 0 3-4.500 3.500-4.500 7M13 19.500v3" fill="none" stroke="#fff" strokeWidth="2.6" />
                <circle cx="24" cy="20" r="5.5" fill="#0c86c4" />
                <path d="M24 16v2M24 19v5" stroke="#fff" strokeWidth="1.6" />
              </svg>
            </button>
            <button aria-label="Hidden icons"><I w={16} h={9} vb="0 0 16 9"><path d="M1 8l7-7 7 7" strokeWidth="1.4" /></I></button>
            <button aria-label="OneDrive">
              <svg width="20" height="14" viewBox="0 0 20 14"><path d="M4 13a4 4 0 0 1 0-7 6 6 0 0 1 11-1 5 5 0 0 1 1 8z" fill="#9d9d9d" /><path d="M3 14a4 4 0 0 1 2-7l6-1 8 4q1 4-3 4z" fill="#fff" /></svg>
            </button>
            <button aria-label="Dropbox">
              <svg width="19" height="17" viewBox="0 0 19 17"><path d="M5 0l4.500 3L5 6 .5 3zM14 0l4.500 3L14 6 9.500 3zM5 6l4.500 3L5 12 .5 9zM14 6l4.500 3-4.500 3-4.500-3zM9.500 11l4 2.500-4 3-4-3z" fill="#fff" /></svg>
            </button>
            <button aria-label="Battery">
              <svg width="21" height="14" viewBox="0 0 21 14"><path d="M5 3.500h14v9H5z" fill="#fff" stroke="#fff" /><path d="M20 6v4" stroke="#fff" strokeWidth="2" /><path d="M1 2v4h4V2M3 6v5h2M1.500 0v2M4.500 0v2" fill="none" stroke="#fff" strokeWidth="1.2" /></svg>
            </button>
            <button aria-label="Volume">
              <I w={22} h={16} vb="0 0 22 16"><path d="M1 5h3l4-4v14l-4-4H1z" strokeWidth="1.3" /><path d="M11 5q2 3 0 6" strokeWidth="1.3" /><path d="M14 3q4 5 0 10M17 1q6 7 0 14" stroke="#777" strokeWidth="1.3" /></I>
            </button>
            <TrayText $w={36}>ENG</TrayText>
            <TrayText $w={42}>14:28</TrayText>
            <button aria-label="Notifications">
              <I w={34} h={20} vb="0 0 34 20">
                <path d="M28 10V1H9v14h6v4l4-4h1" strokeWidth="1.4" />
                <path d="M27 11a4.500 4.500 0 1 1-6 6 5 5 0 0 0 6-6z" strokeWidth="1.3" />
              </I>
            </button>
            <Peek />
          </Tray>
        </Taskbar>
      </Shell>
    </>
  );
}
